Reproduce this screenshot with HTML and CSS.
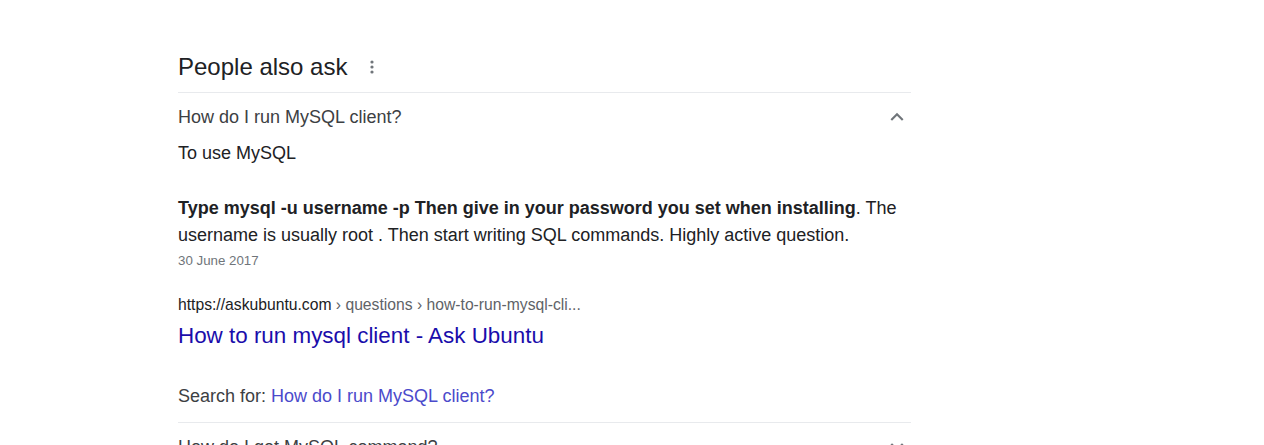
FILE: index.html
```html
<!DOCTYPE html>
<html>
<head>
<meta charset="utf-8">
<link rel="stylesheet" href="styles.css">
</head>
<body>
<div class="paa">
  <div class="paa-head">
    <h2 class="paa-title">People also ask</h2>
    <svg class="dots" width="4" height="14" viewBox="0 0 4 14"><circle cx="2" cy="2" r="1.6"/><circle cx="2" cy="7" r="1.6"/><circle cx="2" cy="12" r="1.6"/></svg>
  </div>
  <div class="item open">
    <div class="q-row">
      <span class="q">How do I run MySQL client?</span>
      <svg class="chev" width="26" height="26" viewBox="0 0 24 24"><path d="M12 8l-6 6 1.41 1.41L12 10.83l4.59 4.58L18 14z"/></svg>
    </div>
    <div class="answer">
      <div class="a-head">To use MySQL</div>
      <div class="a-text"><b>Type mysql -u username -p Then give in your password you set when installing</b>. The username is usually root . Then start writing SQL commands. Highly active question.</div>
      <div class="a-date">30 June 2017</div>
      <div class="src">
        <div class="url"><span class="dom">https://askubuntu.com</span> › questions › how-to-run-mysql-cli...</div>
        <a class="title" href="#">How to run mysql client - Ask Ubuntu</a>
      </div>
      <div class="search-for">Search for: <a href="#">How do I run MySQL client?</a></div>
    </div>
  </div>
  <div class="item">
    <div class="q-row">
      <span class="q">How do I get MySQL command?</span>
      <svg class="chev" width="26" height="26" viewBox="0 0 24 24"><path d="M16.59 8.59L12 13.17 7.41 8.59 6 10l6 6 6-6z"/></svg>
    </div>
  </div>
</div>
</body>
</html>
```
FILE: styles.css
```css
html, body {
  margin: 0;
  padding: 0;
  background: #fff;
}
body {
  font-family: "Liberation Sans", Arial, sans-serif;
  color: #202124;
}
.paa {
  width: 733px;
  margin-left: 178px;
  padding-top: 48px;
}
.paa-head {
  display: flex;
  align-items: center;
  gap: 23px;
  height: 38px;
  padding-bottom: 6px;
  border-bottom: 1px solid #e8eaed;
}
.paa-title {
  margin: 0;
  font-size: 24px;
  font-weight: normal;
  line-height: 30px;
  color: #202124;
}
.dots {
  fill: #70757a;
  margin-top: -1px;
}
.item {
  border-bottom: 1px solid #e8eaed;
}
.q-row {
  display: flex;
  align-items: center;
  justify-content: space-between;
  height: 48px;
}
.q {
  font-size: 18px;
  color: #3c4043;
  line-height: 24px;
}
.chev {
  fill: #70757a;
  margin-right: 1px;
}
.answer {
  padding-bottom: 14px;
}
.a-head {
  font-size: 18px;
  line-height: 24px;
  margin-bottom: 30px;
}
.a-text {
  font-size: 18px;
  line-height: 27px;
}
.a-text b {
  font-weight: bold;
}
.a-date {
  font-size: 13.3px;
  line-height: 20px;
  color: #70757a;
  margin-top: 2px;
}
.src {
  margin-top: 23px;
}
.url {
  font-size: 15.7px;
  line-height: 22px;
  color: #5f6368;
}
.url .dom {
  color: #202124;
}
.title {
  display: block;
  font-size: 22.4px;
  line-height: 28px;
  color: #1a0dab;
  text-decoration: none;
  margin-top: 6px;
}
.search-for {
  margin-top: 34px;
  font-size: 18px;
  line-height: 24px;
  color: #3c4043;
}
.search-for a {
  color: #4b4acb;
  text-decoration: none;
}
```
